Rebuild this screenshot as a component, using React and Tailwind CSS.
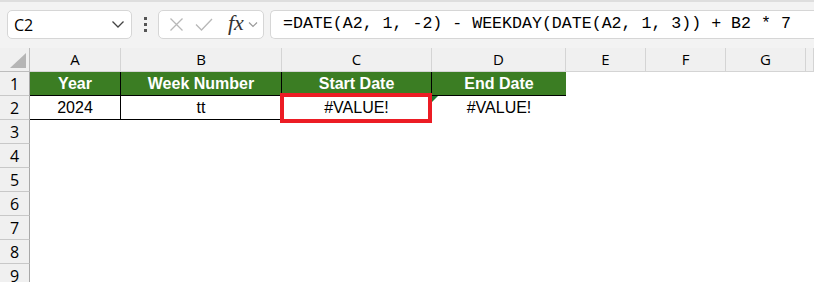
import React from 'react';

const COLS = ['A', 'B', 'C', 'D', 'E', 'F', 'G', ''];
const ROWS = [1, 2, 3, 4, 5, 6, 7, 8, 9];

const cellFont = { fontFamily: '"Liberation Sans", Arial, sans-serif' };
const uiFont = { fontFamily: '"Open Sans", "Liberation Sans", sans-serif' };

function FormulaBar() {
  return (
    <div className="flex items-center h-[48px] bg-[#f3f3f3] border-t-2 border-[#dedede] pl-[7px] pb-[1px]">
      <div className="flex items-center justify-between w-[125px] h-[29px] bg-white border border-[#d6d6d6] rounded-[5px] pl-[6px] pr-[6px]">
        <span className="text-[16px] text-black" style={uiFont}>C2</span>
        <svg width="14" height="9" viewBox="0 0 14 9" fill="none" stroke="#444" strokeWidth="1.3">
          <path d="M1.5 1.5 L7 7 L12.5 1.5" />
        </svg>
      </div>
      <div className="flex flex-col gap-[3px] w-[26px] items-center">
        <span className="w-[3px] h-[3px] bg-[#555]" />
        <span className="w-[3px] h-[3px] bg-[#555]" />
        <span className="w-[3px] h-[3px] bg-[#555]" />
      </div>
      <div className="flex items-center w-[106px] h-[29px] bg-white border border-[#d6d6d6] rounded-[5px] pl-[10px]">
        <svg width="15" height="15" viewBox="0 0 15 15" fill="none" stroke="#b8b8b8" strokeWidth="1.3">
          <path d="M1.5 1.5 L13.5 13.5 M13.5 1.5 L1.5 13.5" />
        </svg>
        <svg className="ml-[11px]" width="18" height="13" viewBox="0 0 18 13" fill="none" stroke="#b8b8b8" strokeWidth="1.3">
          <path d="M1 6.5 L6.5 12 L17 1" />
        </svg>
        <span className="ml-[15px] text-[22px] italic text-[#333] leading-none -mt-[3px]" style={{ fontFamily: '"Liberation Serif", "Times New Roman", serif' }}>fx</span>
        <svg className="ml-[4px]" width="10" height="7" viewBox="0 0 10 7" fill="none" stroke="#999" strokeWidth="1.2">
          <path d="M1 1.5 L5 5.5 L9 1.5" />
        </svg>
      </div>
      <div className="flex items-center flex-1 h-[29px] ml-[6px] bg-white border border-r-0 border-[#d6d6d6] rounded-l-[5px] pl-[12px]">
        <span className="text-[16.6px] text-black whitespace-pre" style={{ fontFamily: '"Liberation Mono", "DejaVu Sans Mono", monospace' }}>
          =DATE(A2, 1, -2) - WEEKDAY(DATE(A2, 1, 3)) + B2 * 7
        </span>
      </div>
    </div>
  );
}

function dataCell(row, col) {
  if (row === 1 && col < 4) {
    const labels = ['Year', 'Week Number', 'Start Date', 'End Date'];
    return (
      <div
        key={`${row}-${col}`}
        className={`flex items-center justify-center bg-[#3b7d23] text-white font-bold text-[16px] border-b border-black ${col < 3 ? 'border-r' : ''}`}
        style={cellFont}
      >
        {labels[col]}
      </div>
    );
  }
  if (row === 2 && col < 4) {
    const vals = ['2024', 'tt', '#VALUE!', '#VALUE!'];
    return (
      <div
        key={`${row}-${col}`}
        className={`flex items-center justify-center bg-white text-black text-[16px] border-black ${col < 3 ? 'border-b border-r' : ''}`}
        style={cellFont}
      >
        {vals[col]}
      </div>
    );
  }
  return <div key={`${row}-${col}`} className="bg-white" />;
}

export default function App() {
  return (
    <div className="w-[814px] h-[282px] overflow-hidden bg-white">
      <FormulaBar />
      <div className="relative">
        <div className="grid grid-cols-[30px_91px_161px_150px_134px_80px_80px_80px_1fr] auto-rows-[24px]">
          <div className="relative bg-[#f0f0f0] border-r border-b border-[#bdbdbd]">
            <svg className="absolute left-[10px] top-[5px]" width="16" height="15" viewBox="0 0 16 15">
              <polygon points="16,0 16,15 0,15" fill="#b5b5b5" />
            </svg>
          </div>
          {COLS.map((c, i) => (
            <div
              key={c + i}
              className="flex items-center justify-center bg-[#f0f0f0] border-r border-b border-[#d4d4d4] text-[15px] text-black"
              style={uiFont}
            >
              {c}
            </div>
          ))}
          {ROWS.map((r) => (
            <React.Fragment key={r}>
              <div
                className="flex items-center justify-center bg-[#f0f0f0] border-r border-b border-r-[#a8a8a8] border-b-[#c8c8c8] text-[16px] text-black"
                style={uiFont}
              >
                {r}
              </div>
              {COLS.map((_, ci) => dataCell(r, ci))}
            </React.Fragment>
          ))}
        </div>
        <div className="absolute left-[280px] top-[45px] w-[152px] h-[30px] border-4 border-[#ec1c24]" />
        <svg className="absolute left-[432px] top-[48px]" width="6" height="6" viewBox="0 0 6 6">
          <polygon points="0,0 6,0 0,6" fill="#1e7b34" />
        </svg>
      </div>
    </div>
  );
}
